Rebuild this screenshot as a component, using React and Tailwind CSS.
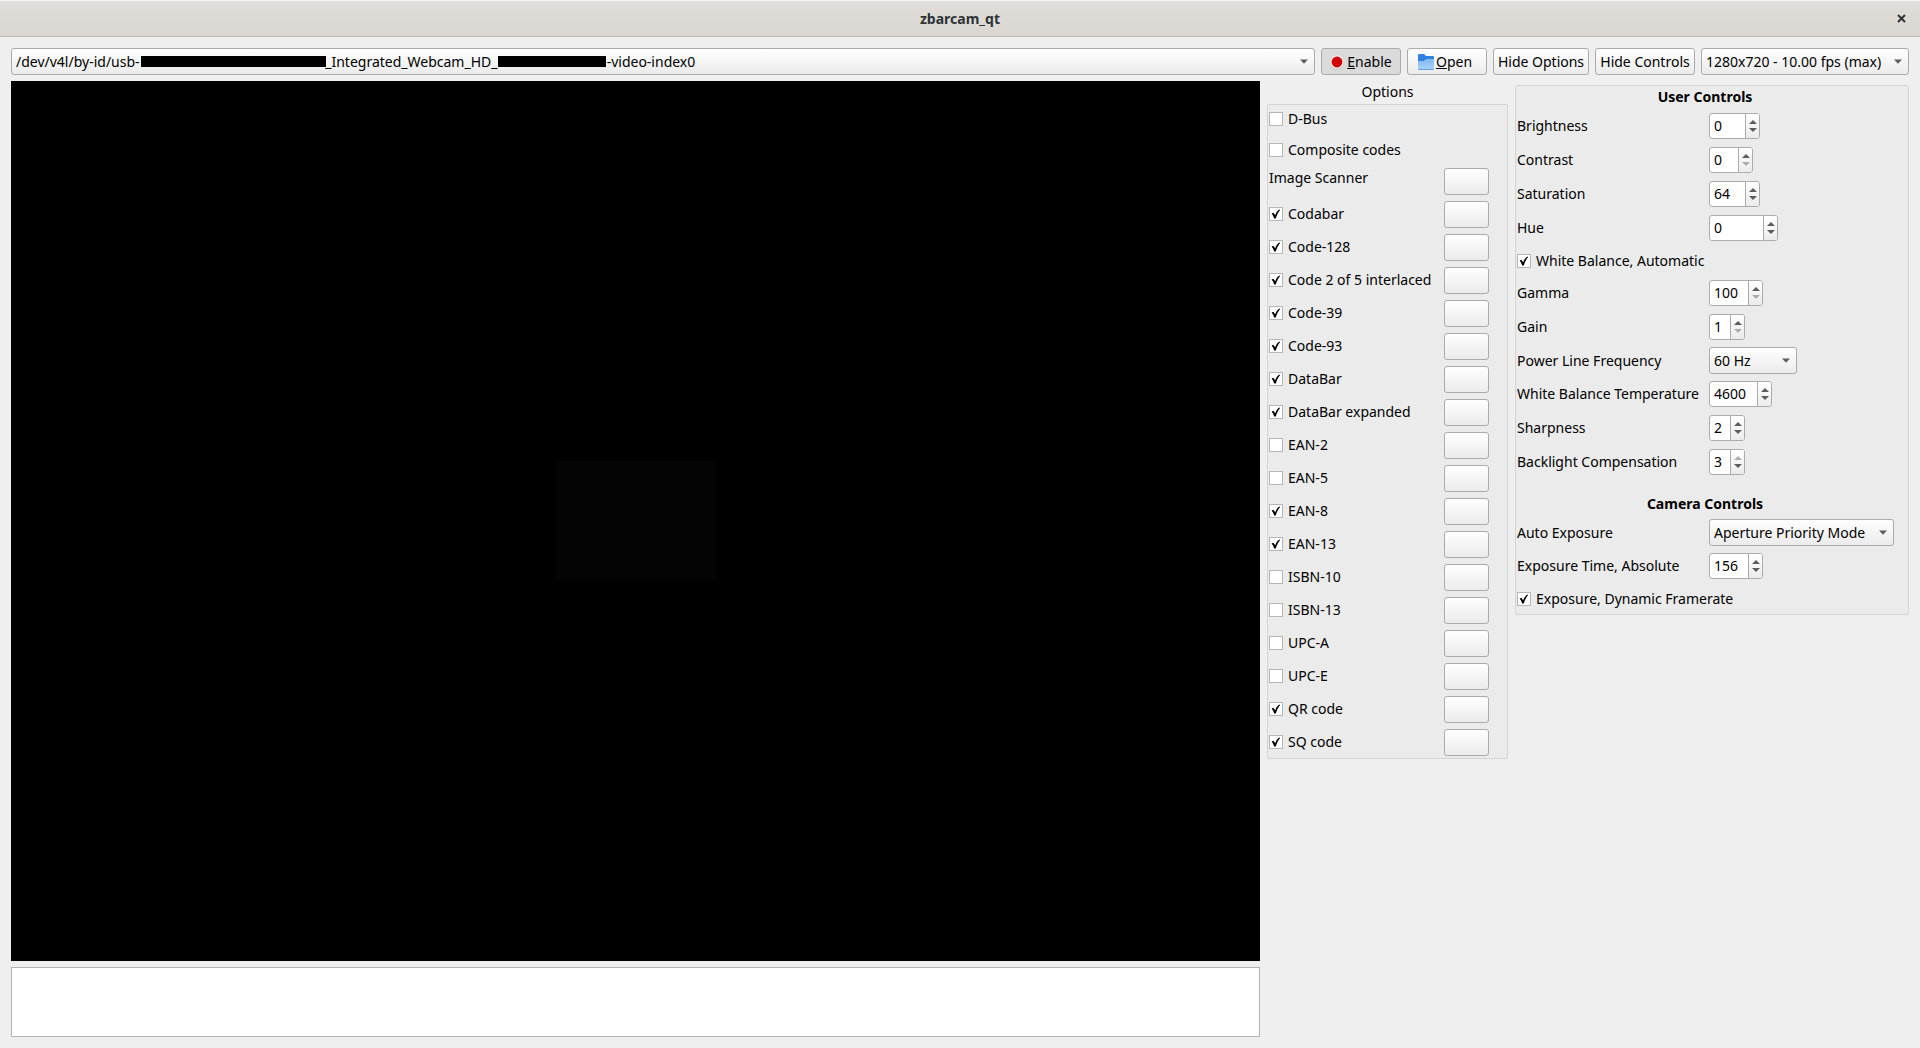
import React, { useState } from 'react';

const SYMBOLOGIES = [
  { name: 'Codabar', on: true },
  { name: 'Code-128', on: true },
  { name: 'Code 2 of 5 interlaced', on: true },
  { name: 'Code-39', on: true },
  { name: 'Code-93', on: true },
  { name: 'DataBar', on: true },
  { name: 'DataBar expanded', on: true },
  { name: 'EAN-2', on: false },
  { name: 'EAN-5', on: false },
  { name: 'EAN-8', on: true },
  { name: 'EAN-13', on: true },
  { name: 'ISBN-10', on: false },
  { name: 'ISBN-13', on: false },
  { name: 'UPC-A', on: false },
  { name: 'UPC-E', on: false },
  { name: 'QR code', on: true },
  { name: 'SQ code', on: true },
];

const USER_CONTROLS = [
  { type: 'int', name: 'Brightness', value: 0, min: -64, max: 64, width: 'w-[51px]' },
  { type: 'int', name: 'Contrast', value: 0, min: 0, max: 95, width: 'w-11' },
  { type: 'int', name: 'Saturation', value: 64, min: 0, max: 100, width: 'w-[51px]' },
  { type: 'int', name: 'Hue', value: 0, min: -2000, max: 2000, width: 'w-[69px]' },
  { type: 'bool', name: 'White Balance, Automatic', value: true },
  { type: 'int', name: 'Gamma', value: 100, min: 100, max: 300, width: 'w-[54px]' },
  { type: 'int', name: 'Gain', value: 1, min: 1, max: 8, width: 'w-9' },
  { type: 'menu', name: 'Power Line Frequency', value: '60 Hz', items: ['Disabled', '50 Hz', '60 Hz'], width: 'w-22' },
  { type: 'int', name: 'White Balance Temperature', value: 4600, min: 2800, max: 6500, width: 'w-[63px]' },
  { type: 'int', name: 'Sharpness', value: 2, min: 1, max: 7, width: 'w-9' },
  { type: 'int', name: 'Backlight Compensation', value: 3, min: 0, max: 3, width: 'w-9' },
];

const CAMERA_CONTROLS = [
  { type: 'menu', name: 'Auto Exposure', value: 'Aperture Priority Mode', items: ['Manual Mode', 'Aperture Priority Mode'], width: 'w-[185px]' },
  { type: 'int', name: 'Exposure Time, Absolute', value: 156, min: 1, max: 5000, width: 'w-[54px]' },
  { type: 'bool', name: 'Exposure, Dynamic Framerate', value: true },
];

// The serial numbers are blanked out of the device path
const DEVICE = '/dev/v4l/by-id/usb-' + '\u00a0'.repeat(51) + '_Integrated_Webcam_HD_' + '\u00a0'.repeat(30) + '-video-index0';

const slug = (name) => name.toLowerCase().replace(/[^a-z0-9]+/g, '-');

function Button({ className = '', children, ...props }) {
  return (
    <button
      type="button"
      className={`h-[27px] shrink-0 rounded-[3px] border border-[#ababab] flex items-center justify-center whitespace-nowrap ${className}`}
      {...props}
    >
      {children}
    </button>
  );
}

function Select({ className = '', items, ...props }) {
  return (
    <div className={`relative grid items-center ${className}`}>
      <select
        className="h-[27px] w-full appearance-none rounded-[3px] border border-[#ababab] bg-linear-to-b from-white to-[#ebebeb] pl-1 pr-5 outline-none"
        {...props}
      >
        {items.map((item) => (
          <option key={item}>{item}</option>
        ))}
      </select>
      <svg className="pointer-events-none absolute right-[7px] h-[5px] w-2" viewBox="0 0 8 5">
        <path d="M0 0.5h8L4 4.8z" fill="#5c5c5c" />
      </svg>
    </div>
  );
}

function CheckBox({ name, initial }) {
  const [checked, setChecked] = useState(initial);
  return (
    <label className="flex h-[26px] items-center gap-[5px] whitespace-nowrap">
      <span className="grid h-[14px] w-[14px] shrink-0">
        <input
          type="checkbox"
          checked={checked}
          onChange={(e) => setChecked(e.target.checked)}
          className="col-start-1 row-start-1 h-[14px] w-[14px] appearance-none border border-[#b6b6b6] bg-white"
        />
        {checked && (
          <svg className="pointer-events-none col-start-1 row-start-1 h-[14px] w-[14px]" viewBox="0 0 14 14">
            <path d="M2.600 6.600l1.700-.8 1.900 2.500C7 6 8.200 4 10.200 2.600l.9.300C9 5.500 7.700 8 6.800 11.500H5.200C4.600 9.600 3.800 8 2.600 6.600z" fill="#000" />
          </svg>
        )}
      </span>
      {name}
    </label>
  );
}

function SpinBox({ id, initial, min, max, width }) {
  const [value, setValue] = useState(initial);
  const step = (delta) => setValue(Math.min(max, Math.max(min, value + delta)));

  return (
    <div className={`flex h-[26px] overflow-hidden rounded-[3px] border border-[#ababab] bg-white ${width}`}>
      <input
        id={id}
        type="number"
        min={min}
        max={max}
        value={value}
        onChange={(e) => setValue(Number(e.target.value))}
        className="min-w-0 flex-1 pl-1 outline-none [appearance:textfield] [&::-webkit-inner-spin-button]:appearance-none"
      />
      <div className="flex w-[14px] shrink-0 flex-col border-l border-[#ababab] bg-linear-to-b from-white to-[#ebebeb]">
        <button type="button" aria-label="Increase" disabled={value >= max} onClick={() => step(1)} className="flex flex-1 items-center justify-center pt-1 text-[#5c5c5c] disabled:text-[#adadad]">
          <svg className="h-1 w-2" viewBox="0 0 8 4"><path d="M0 4h8L4 0z" fill="currentColor" /></svg>
        </button>
        <button type="button" aria-label="Decrease" disabled={value <= min} onClick={() => step(-1)} className="flex flex-1 items-center justify-center pb-1 text-[#5c5c5c] disabled:text-[#adadad]">
          <svg className="h-1 w-2" viewBox="0 0 8 4"><path d="M0 0h8L4 4z" fill="currentColor" /></svg>
        </button>
      </div>
    </div>
  );
}

function Control({ control }) {
  const id = slug(control.name);

  if (control.type === 'bool') {
    return (
      <div className="flex h-[31px] items-center">
        <CheckBox name={control.name} initial={control.value} />
      </div>
    );
  }

  return (
    <div className={`flex items-center ${control.type === 'menu' ? 'h-[33px]' : 'h-[34px]'}`}>
      <label htmlFor={id} className="w-48 shrink-0 whitespace-nowrap">{control.name}</label>
      {control.type === 'menu' ? (
        <Select id={id} items={control.items} defaultValue={control.value} className={control.width} />
      ) : (
        <SpinBox id={id} initial={control.value} min={control.min} max={control.max} width={control.width} />
      )}
    </div>
  );
}

export default function App() {
  const [enabled, setEnabled] = useState(true);
  const [showOptions, setShowOptions] = useState(true);
  const [showControls, setShowControls] = useState(true);

  return (
    <div className="flex min-h-screen flex-col bg-[#efefef] font-['Noto_Sans',sans-serif] text-[14px] leading-5 text-black">
      {/* Title bar */}
      <header className="grid h-[37px] grid-cols-[1fr_auto_1fr] items-center border-t border-b border-t-[#f6f5f4] border-b-[#bfb8b1] bg-linear-to-b from-[#e1dedb] to-[#dad6d0] px-3">
        <h1 className="col-start-2 font-bold text-[#2e3436]">zbarcam_qt</h1>
        <button type="button" aria-label="Close" className="justify-self-end p-[2px]">
          <svg className="h-[9px] w-[9px]" viewBox="0 0 9 9">
            <path d="M1 1l7 7M8 1l-7 7" stroke="#2e3436" strokeWidth="2" />
          </svg>
        </button>
      </header>

      {/* Toolbar */}
      <div className="flex gap-[6px] px-[11px] pt-[11px] pb-[6px]">
        <div className="relative grid min-w-0 flex-1 items-center">
          <Select aria-label="Video device" items={[DEVICE]} />
          <span className="pointer-events-none absolute left-[130px] h-[11px] w-[185px] bg-black" />
          <span className="pointer-events-none absolute left-[487px] h-[11px] w-[108px] bg-black" />
        </div>
        <Button
          aria-pressed={enabled}
          onClick={() => setEnabled(!enabled)}
          className={`w-20 gap-[2px] pr-px ${enabled ? 'bg-[#dadada]' : 'bg-linear-to-b from-white to-[#ebebeb]'}`}
        >
          <svg className="h-4 w-4" viewBox="0 0 16 16">
            <circle cx="8" cy="8.500" r="7" fill="#bdbdbd" />
            <circle cx="8" cy="8" r="6.800" fill="#f0eeee" />
            <circle cx="8" cy="8" r="5.400" fill="#d40000" />
          </svg>
          <span><u>E</u>nable</span>
        </Button>
        <Button className="w-20 gap-[2px] bg-linear-to-b from-white to-[#ebebeb] pr-1">
          <svg className="h-4 w-4" viewBox="0 0 16 16">
            <defs>
              <linearGradient id="folder" x1="0" y1="0" x2="0" y2="1">
                <stop offset="0" stopColor="#81b8f2" />
                <stop offset="1" stopColor="#a9d2f8" />
              </linearGradient>
            </defs>
            <path d="M0 1q0-1 1-1h5l2 2h7q1 0 1 1v12H0z" fill="#2f80e0" />
            <path d="M0 8q0-1 1-1h5l2-2h8v10q0 1-1 1H1q-1 0-1-1z" fill="url(#folder)" />
            <path d="M0 15h16q0 1-1 1H1q-1 0-1-1z" fill="#5f9fe3" />
          </svg>
          <span><u>O</u>pen</span>
        </Button>
        <Button onClick={() => setShowOptions(!showOptions)} className="w-24 bg-linear-to-b from-white to-[#ebebeb]">
          {showOptions ? 'Hide Options' : 'Show Options'}
        </Button>
        <Button onClick={() => setShowControls(!showControls)} className="w-[100px] bg-linear-to-b from-white to-[#ebebeb]">
          {showControls ? 'Hide Controls' : 'Show Controls'}
        </Button>
        <Select aria-label="Resolution" items={['1280x720 - 10.00 fps (max)']} className="w-52" />
      </div>

      <main className="flex flex-1 gap-[7px] px-[11px] pb-[11px]">
        {/* Video preview and decoded text */}
        <div className="flex min-w-0 flex-1 flex-col gap-[6px]">
          <div className="flex flex-1 items-center justify-center bg-black">
            <div className="h-[120px] w-40 bg-[#040404]" />
          </div>
          <textarea aria-label="Decoded text" className="block h-[70px] resize-none border border-[#b4b4b4] bg-white outline-none" />
        </div>

        {showOptions && (
          <section className="w-[241px] shrink-0">
            <h2 className="h-[23px] text-center leading-[22px]">Options</h2>
            <div className="flex flex-col gap-[6px] rounded-[2px] border border-[#d4d4d4] bg-[#ebebeb] p-px pb-[2px]">
              <div className="h-[25px]"><CheckBox name="D-Bus" initial={false} /></div>
              <div className="h-[25px]"><CheckBox name="Composite codes" initial={false} /></div>
              <div className="flex justify-between pr-[17px]">
                <span>Image Scanner</span>
                <Button aria-label="Image Scanner settings" className="w-[45px] bg-linear-to-b from-white to-[#ebebeb]" />
              </div>
              {SYMBOLOGIES.map((sym) => (
                <div key={sym.name} className="flex justify-between pr-[17px]">
                  <CheckBox name={sym.name} initial={sym.on} />
                  <Button aria-label={`${sym.name} settings`} className="w-[45px] bg-linear-to-b from-white to-[#ebebeb]" />
                </div>
              ))}
            </div>
          </section>
        )}

        {showControls && (
          <section className="w-[394px] shrink-0 pt-1">
            <div className="rounded-[2px] border border-[#d4d4d4] bg-[#ebebeb] px-px">
              <h2 className="pr-[14px] pb-[2px] text-center leading-[21px] font-bold">User Controls</h2>
              {USER_CONTROLS.map((control) => (
                <Control key={control.name} control={control} />
              ))}
              <h2 className="pt-[14px] pr-[14px] pb-[2px] text-center leading-[21px] font-bold">Camera Controls</h2>
              {CAMERA_CONTROLS.map((control) => (
                <Control key={control.name} control={control} />
              ))}
            </div>
          </section>
        )}
      </main>
    </div>
  );
}
